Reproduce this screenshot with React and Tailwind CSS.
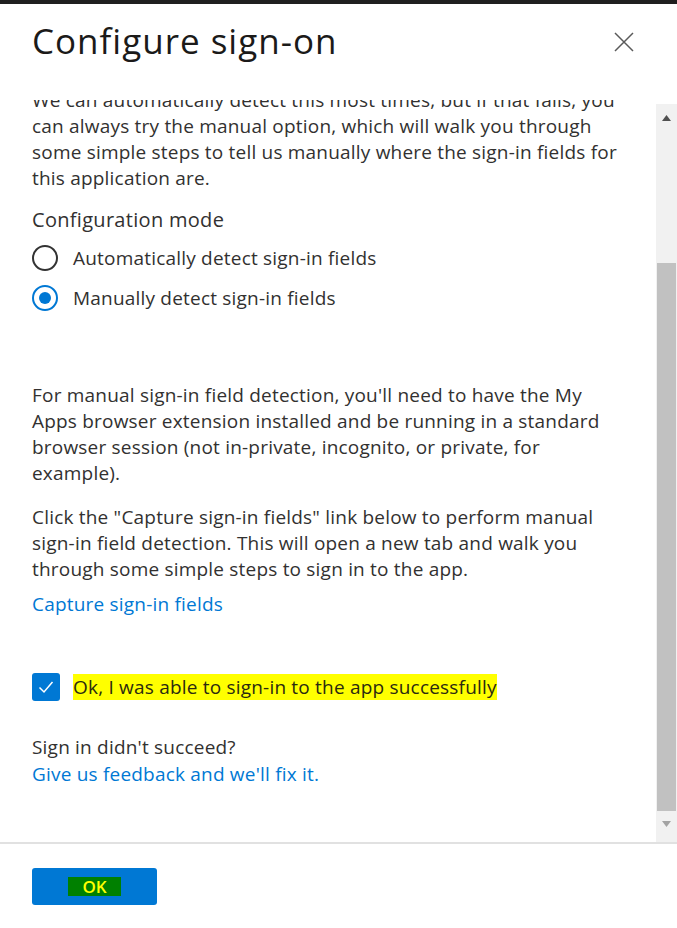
const font = { fontFamily: '"Segoe UI", "Open Sans", "Noto Sans", sans-serif' };

const Radio = ({ checked, label }) => (
  <div className="flex items-center h-[40px]">
    <span
      className={
        checked
          ? "w-[26px] h-[26px] rounded-full border-2 border-[#0078d4] flex items-center justify-center"
          : "w-[26px] h-[26px] rounded-full border-2 border-[#333333]"
      }
    >
      {checked && <span className="w-[12px] h-[12px] rounded-full bg-[#0078d4]" />}
    </span>
    <span className="ml-[15px]">{label}</span>
  </div>
);

export default function App() {
  return (
    <div className="w-[677px] h-[928px] bg-white flex flex-col text-[#323130] overflow-hidden" style={font}>
      <div className="h-[4px] bg-[#1f1f1f]" />

      {/* Header */}
      <div className="h-[96px] shrink-0 flex items-start justify-between pl-[32px] pr-[43px] pt-[15px]">
        <h1 className="text-[35px] leading-[44px] tracking-[1px] text-[#1b1a19]">Configure sign-on</h1>
        <button type="button" className="mt-[13px]">
          <svg width="20" height="20" viewBox="0 0 20 20" fill="none" stroke="#5a5a5a" strokeWidth="1.5">
            <path d="M1 1 L19 19 M19 1 L1 19" />
          </svg>
        </button>
      </div>

      {/* Body */}
      <div className="flex flex-1 min-h-0">
        <div className="flex-1 overflow-hidden pl-[32px] text-[19px] leading-[26px] tracking-[0.2px]">
          <p className="whitespace-nowrap mt-[-13px]">
            We can automatically detect this most times, but if that fails, you
            <br />
            can always try the manual option, which will walk you through
            <br />
            some simple steps to tell us manually where the sign-in fields for
            <br />
            this application are.
          </p>

          <div className="mt-[16px] text-[20px] tracking-[0.3px]">Configuration mode</div>
          <div className="mt-[5px]">
            <Radio label="Automatically detect sign-in fields" />
            <Radio checked label="Manually detect sign-in fields" />
          </div>

          <p className="whitespace-nowrap mt-[64px]">
            For manual sign-in field detection, you'll need to have the My
            <br />
            Apps browser extension installed and be running in a standard
            <br />
            browser session (not in-private, incognito, or private, for
            <br />
            example).
          </p>

          <p className="whitespace-nowrap mt-[18px]">
            Click the "Capture sign-in fields" link below to perform manual
            <br />
            sign-in field detection. This will open a new tab and walk you
            <br />
            through some simple steps to sign in to the app.
          </p>

          <a href="#" className="block mt-[9px] text-[#0078d4]">
            Capture sign-in fields
          </a>

          <div className="flex items-center mt-[56px]">
            <span className="w-[28px] h-[28px] rounded-[3px] bg-[#0078d4] flex items-center justify-center">
              <svg width="18" height="18" viewBox="0 0 18 18" fill="none" stroke="white" strokeWidth="1.5">
                <path d="M2.5 9.5 L7 14 L15.5 4" />
              </svg>
            </span>
            <span className="ml-[13px] bg-[#ffff00] text-[#2b2a10]">Ok, I was able to sign-in to the app successfully</span>
          </div>

          <div className="mt-[33px]">Sign in didn't succeed?</div>
          <a href="#" className="block mt-[1px] text-[#0078d4]">
            Give us feedback and we'll fix it.
          </a>
        </div>

        {/* Scrollbar */}
        <div className="w-[21px] mt-[4px] bg-[#f1f1f1] flex flex-col items-center">
          <div className="h-[28px] flex items-center justify-center">
            <svg width="9" height="6" viewBox="0 0 9 6">
              <path d="M0 6 L4.5 0 L9 6 Z" fill="#505050" />
            </svg>
          </div>
          <div className="w-[19px] mt-[131px] h-[548px] bg-[#c1c1c1]" />
          <div className="h-[26px] flex items-center justify-center">
            <svg width="9" height="6" viewBox="0 0 9 6">
              <path d="M0 0 L9 0 L4.5 6 Z" fill="#a3a3a3" />
            </svg>
          </div>
        </div>
      </div>

      {/* Footer */}
      <div className="h-[86px] shrink-0 border-t-2 border-[#e1e1e1] pl-[32px] pt-[24px]">
        <button type="button" className="w-[125px] h-[37px] rounded-[3px] bg-[#0078d4] flex items-center justify-center">
          <span className="bg-[#008000] text-[#ffff00] text-[17px] leading-[19px] font-semibold px-[14px]">OK</span>
        </button>
      </div>
    </div>
  );
}
